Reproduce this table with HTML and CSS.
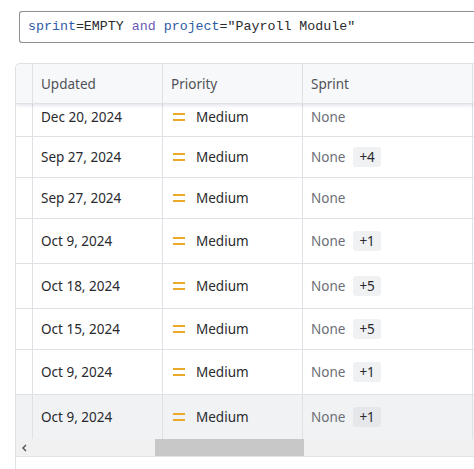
FILE: index.html
```html
<!DOCTYPE html>
<html>
<head>
<meta charset="utf-8">
<link rel="stylesheet" href="styles.css">
</head>
<body>
<div class="query"><span class="fld">sprint</span><span class="op">=EMPTY</span> <span class="kw">and</span> <span class="fld">project</span><span class="op">="Payroll Module"</span></div>

<div class="table-wrap">
  <div class="grid">
    <div class="row head">
      <div class="cell c0"></div>
      <div class="cell c1">Updated</div>
      <div class="cell c2">Priority</div>
      <div class="cell c3">Sprint</div>
      <div class="cell c4"></div>
    </div>
    <div class="row h33">
      <div class="cell c0"></div>
      <div class="cell c1">Dec 20, 2024</div>
      <div class="cell c2"><span class="prio"></span>Medium</div>
      <div class="cell c3"><span class="none">None</span></div>
      <div class="cell c4"></div>
    </div>
    <div class="row h41">
      <div class="cell c0"></div>
      <div class="cell c1">Sep 27, 2024</div>
      <div class="cell c2"><span class="prio"></span>Medium</div>
      <div class="cell c3"><span class="none">None</span><span class="more">+4</span></div>
      <div class="cell c4"></div>
    </div>
    <div class="row h41">
      <div class="cell c0"></div>
      <div class="cell c1">Sep 27, 2024</div>
      <div class="cell c2"><span class="prio"></span>Medium</div>
      <div class="cell c3"><span class="none">None</span></div>
      <div class="cell c4"></div>
    </div>
    <div class="row h45">
      <div class="cell c0"></div>
      <div class="cell c1">Oct 9, 2024</div>
      <div class="cell c2"><span class="prio"></span>Medium</div>
      <div class="cell c3"><span class="none">None</span><span class="more">+1</span></div>
      <div class="cell c4"></div>
    </div>
    <div class="row h45">
      <div class="cell c0"></div>
      <div class="cell c1">Oct 18, 2024</div>
      <div class="cell c2"><span class="prio"></span>Medium</div>
      <div class="cell c3"><span class="none">None</span><span class="more">+5</span></div>
      <div class="cell c4"></div>
    </div>
    <div class="row h41">
      <div class="cell c0"></div>
      <div class="cell c1">Oct 15, 2024</div>
      <div class="cell c2"><span class="prio"></span>Medium</div>
      <div class="cell c3"><span class="none">None</span><span class="more">+5</span></div>
      <div class="cell c4"></div>
    </div>
    <div class="row h45">
      <div class="cell c0"></div>
      <div class="cell c1">Oct 9, 2024</div>
      <div class="cell c2"><span class="prio"></span>Medium</div>
      <div class="cell c3"><span class="none">None</span><span class="more">+1</span></div>
      <div class="cell c4"></div>
    </div>
    <div class="row h44 hover">
      <div class="cell c0"></div>
      <div class="cell c1">Oct 9, 2024</div>
      <div class="cell c2"><span class="prio"></span>Medium</div>
      <div class="cell c3"><span class="none">None</span><span class="more">+1</span></div>
      <div class="cell c4"></div>
    </div>
  </div>
  <div class="hscroll">
    <span class="arrow"><svg width="8" height="8" viewBox="0 0 8 8"><path d="M5 1 L2 4 L5 7" fill="none" stroke="#505050" stroke-width="1.4"/></svg></span>
    <span class="thumb"></span>
  </div>
  <div class="foot"></div>
</div>
</body>
</html>
```

FILE: styles.css
```css
html, body {
  margin: 0;
  padding: 0;
  background: #ffffff;
}
body {
  font-family: "Noto Sans", "Open Sans", sans-serif;
  font-size: 13.5px;
  color: #292a2e;
  width: 474px;
  height: 469px;
  overflow: hidden;
}
.query {
  margin: 11px 0 0 19px;
  height: 30px;
  line-height: 30px;
  box-sizing: content-box;
  width: 446px;
  border: 1px solid #8c8f94;
  border-right: none;
  border-radius: 3px 0 0 3px;
  padding-left: 8px;
  font-family: "Liberation Mono", "DejaVu Sans Mono", monospace;
  font-size: 13.3px;
  white-space: pre;
  overflow: hidden;
  color: #292a2e;
}
.fld { color: #2d5aa8; }
.kw { color: #6a5cb8; }
.op { color: #292a2e; }

.table-wrap {
  margin: 20px 0 0 15px;
  width: 458px;
  height: 420px;
  border: 1px solid #dfe1e6;
  border-right: none;
  border-radius: 5px 0 0 0;
  overflow: hidden;
  display: flex;
  flex-direction: column;
}
.grid {
  display: flex;
  flex-direction: column;
}
.row {
  display: grid;
  grid-template-columns: 17px 130px 140px 170px 1fr;
}
.cell {
  border-right: 1px solid #dfe1e6;
  border-bottom: 1px solid #dfe1e6;
  display: flex;
  align-items: center;
  padding-left: 8px;
  white-space: nowrap;
  overflow: hidden;
}
.c0 { padding-left: 0; }
.c4 { border-right: none; }
.head {
  height: 40px;
  background: #f7f8f9;
  color: #505258;
  box-shadow: 0 2px 3px rgba(9, 30, 66, 0.10);
  position: relative;
  z-index: 1;
}
.h33 { height: 33px; }
.h33 .cell { padding-bottom: 6px; }
.h41 { height: 41px; }
.h44 { height: 44px; }
.h45 { height: 45px; }
.hover { background: #f1f2f4; }
.hover .cell { border-bottom: none; }

.prio {
  width: 12px;
  height: 8px;
  border-top: 2.5px solid #eba92a;
  border-bottom: 2.5px solid #eba92a;
  box-sizing: border-box;
  margin: 0 11px 0 2px;
}
.none { color: #6b6e76; }
.more {
  margin-left: 8px;
  background: #f0f1f3;
  border-radius: 3px;
  height: 20px;
  padding: 0 6px;
  display: flex;
  align-items: center;
  color: #292a2e;
}
.hover .more { background: #e6e7ea; }

.hscroll {
  height: 17px;
  background: #f1f1f1;
  position: relative;
  display: flex;
  align-items: center;
}
.arrow {
  display: flex;
  margin-left: 5px;
}
.thumb {
  position: absolute;
  left: 139px;
  top: 0;
  width: 149px;
  height: 17px;
  background: #c8c8c8;
}
.foot {
  flex: 1;
  border-top: 1px solid #e4e4e4;
  background: #ffffff;
}
```
